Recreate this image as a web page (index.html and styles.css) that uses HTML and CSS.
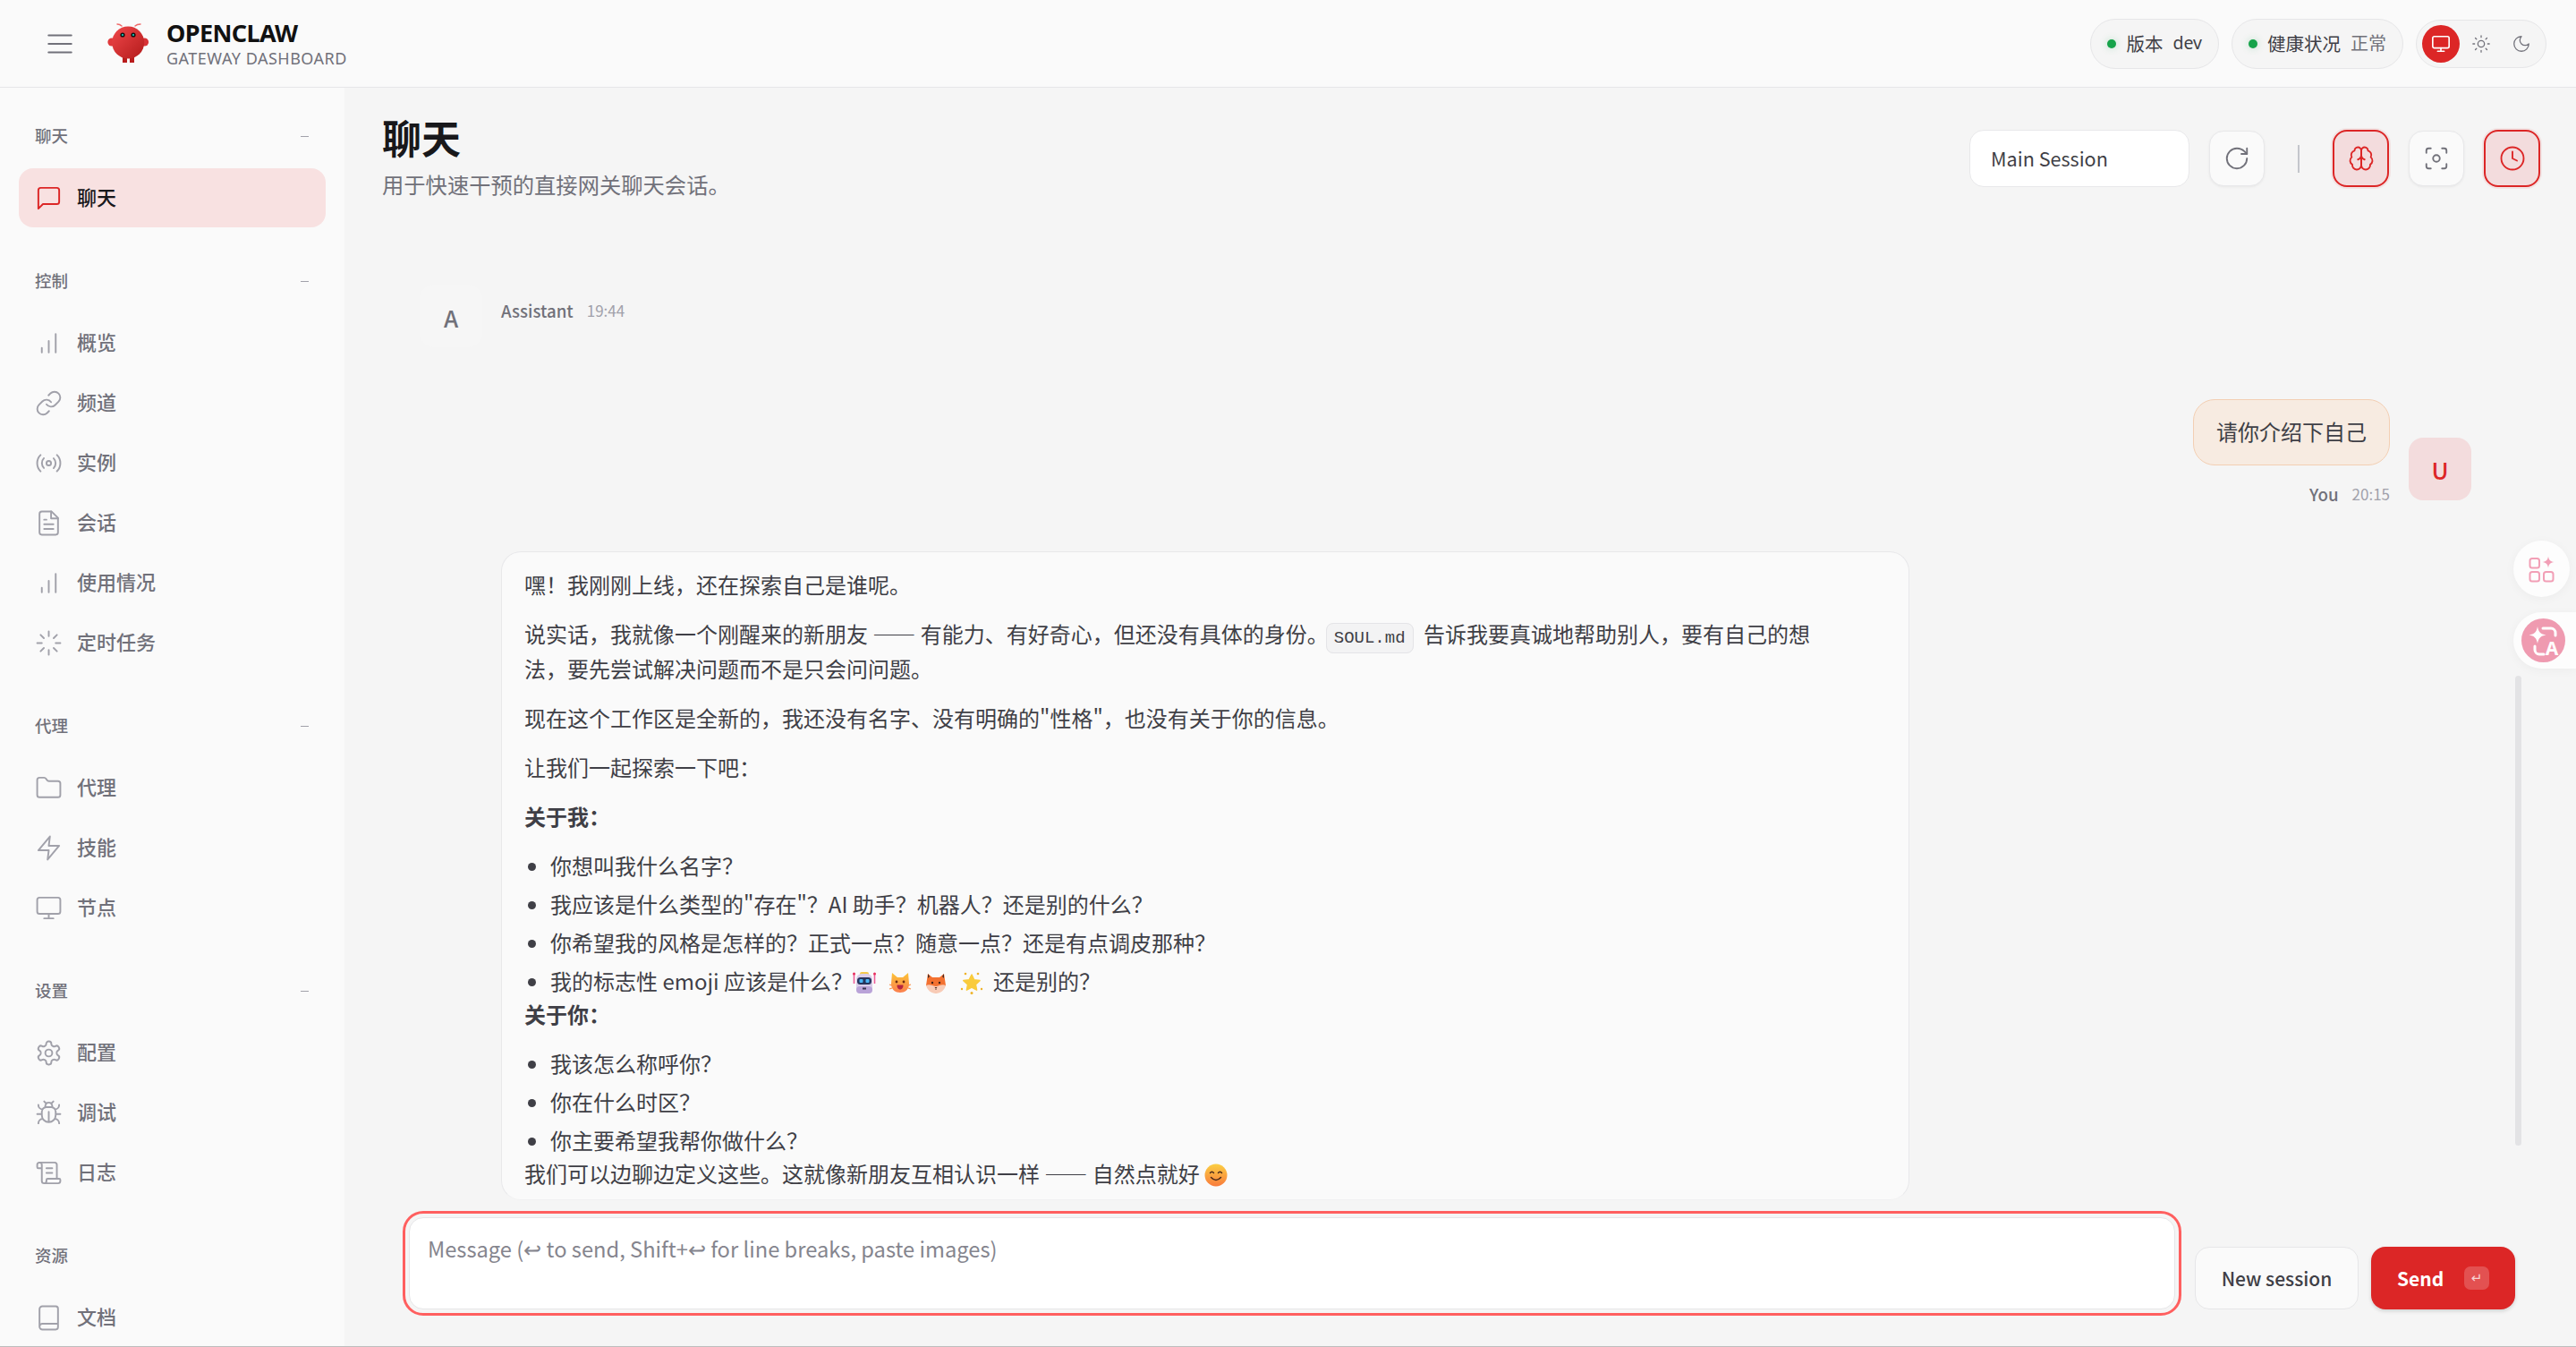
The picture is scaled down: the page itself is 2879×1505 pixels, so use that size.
FILE: index.html
```html
<!DOCTYPE html>
<html lang="zh-CN">
<head>
<meta charset="utf-8">
<title>OpenClaw Gateway Dashboard</title>
<link rel="stylesheet" href="styles.css">
</head>
<body>
<svg class="defs" aria-hidden="true">
  <symbol id="i-menu" viewBox="0 0 24 24"><path d="M4 6h16M4 12h16M4 18h16"/></symbol>
  <symbol id="i-chat" viewBox="0 0 24 24"><path d="M21 15a2 2 0 0 1-2 2H7l-4 4V5a2 2 0 0 1 2-2h14a2 2 0 0 1 2 2z"/></symbol>
  <symbol id="i-bars" viewBox="0 0 24 24"><path d="M12 20V10M18 20V4M6 20v-4"/></symbol>
  <symbol id="i-link" viewBox="0 0 24 24"><path d="M10 13a5 5 0 0 0 7.54.54l3-3a5 5 0 0 0-7.07-7.07l-1.72 1.71"/><path d="M14 11a5 5 0 0 0-7.54-.54l-3 3a5 5 0 0 0 7.07 7.07l1.71-1.71"/></symbol>
  <symbol id="i-radio" viewBox="0 0 24 24"><path d="M4.9 19.1C1 15.2 1 8.8 4.9 4.9"/><path d="M7.8 16.2c-2.3-2.3-2.3-6.1 0-8.5"/><circle cx="12" cy="12" r="2"/><path d="M16.2 7.8c2.3 2.3 2.3 6.1 0 8.5"/><path d="M19.1 4.9C23 8.8 23 15.1 19.1 19"/></symbol>
  <symbol id="i-file" viewBox="0 0 24 24"><path d="M14.5 2H6a2 2 0 0 0-2 2v16a2 2 0 0 0 2 2h12a2 2 0 0 0 2-2V7.5L14.5 2z"/><path d="M14 2v6h6M16 13H8M16 17H8M10 9H8"/></symbol>
  <symbol id="i-loader" viewBox="0 0 24 24"><path d="M12 2v4M12 18v4M4.93 4.93l2.83 2.83M16.24 16.24l2.83 2.83M2 12h4M18 12h4M4.93 19.07l2.83-2.83M16.24 7.76l2.83-2.83"/></symbol>
  <symbol id="i-folder" viewBox="0 0 24 24"><path d="M4 20h16a2 2 0 0 0 2-2V8a2 2 0 0 0-2-2h-7.93a2 2 0 0 1-1.66-.9l-.82-1.2A2 2 0 0 0 7.93 3H4a2 2 0 0 0-2 2v13c0 1.1.9 2 2 2Z"/></symbol>
  <symbol id="i-zap" viewBox="0 0 24 24"><path d="M13 2 3 14h9l-1 8 10-12h-9l1-8z"/></symbol>
  <symbol id="i-monitor" viewBox="0 0 24 24"><rect x="2" y="3" width="20" height="14" rx="2"/><path d="M8 21h8M12 17v4"/></symbol>
  <symbol id="i-gear" viewBox="0 0 24 24"><path d="M12.22 2h-.44a2 2 0 0 0-2 2v.18a2 2 0 0 1-1 1.73l-.43.25a2 2 0 0 1-2 0l-.15-.08a2 2 0 0 0-2.73.73l-.22.38a2 2 0 0 0 .73 2.73l.15.1a2 2 0 0 1 1 1.72v.51a2 2 0 0 1-1 1.74l-.15.09a2 2 0 0 0-.73 2.73l.22.38a2 2 0 0 0 2.73.73l.15-.08a2 2 0 0 1 2 0l.43.25a2 2 0 0 1 1 1.73V20a2 2 0 0 0 2 2h.44a2 2 0 0 0 2-2v-.18a2 2 0 0 1 1-1.73l.43-.25a2 2 0 0 1 2 0l.15.08a2 2 0 0 0 2.73-.73l.22-.39a2 2 0 0 0-.73-2.73l-.15-.08a2 2 0 0 1-1-1.74v-.5a2 2 0 0 1 1-1.74l.15-.09a2 2 0 0 0 .73-2.73l-.22-.38a2 2 0 0 0-2.73-.73l-.15.08a2 2 0 0 1-2 0l-.43-.25a2 2 0 0 1-1-1.73V4a2 2 0 0 0-2-2z"/><circle cx="12" cy="12" r="3"/></symbol>
  <symbol id="i-bug" viewBox="0 0 24 24"><path d="m8 2 1.88 1.88M14.12 3.88 16 2M9 7.13v-1a3.003 3.003 0 1 1 6 0v1"/><path d="M12 20c-3.3 0-6-2.7-6-6v-3a4 4 0 0 1 4-4h4a4 4 0 0 1 4 4v3c0 3.3-2.7 6-6 6M12 20v-9M6.53 9C4.6 8.8 3 7.1 3 5M6 13H2M3 21c0-2.1 1.7-3.9 3.8-4M20.97 5c0 2.1-1.6 3.8-3.5 4M22 13h-4M17.2 17c2.1.1 3.8 1.9 3.8 4"/></symbol>
  <symbol id="i-scroll" viewBox="0 0 24 24"><path d="M15 12h-5M15 8h-5M19 17V5a2 2 0 0 0-2-2H4"/><path d="M8 21h12a2 2 0 0 0 2-2v-1a1 1 0 0 0-1-1H11a1 1 0 0 0-1 1v1a2 2 0 1 1-4 0V5a2 2 0 1 0-4 0v2a1 1 0 0 0 1 1h3"/></symbol>
  <symbol id="i-book" viewBox="0 0 24 24"><path d="M4 19.5v-15A2.5 2.5 0 0 1 6.5 2H18a2 2 0 0 1 2 2v16a2 2 0 0 1-2 2H6.5a2.5 2.5 0 0 1 0-5H20"/></symbol>
  <symbol id="i-sun" viewBox="0 0 24 24"><circle cx="12" cy="12" r="4"/><path d="M12 2v2M12 20v2M4.93 4.93l1.41 1.41M17.66 17.66l1.41 1.41M2 12h2M20 12h2M6.34 17.66l-1.41 1.41M19.07 4.93l-1.41 1.41"/></symbol>
  <symbol id="i-moon" viewBox="0 0 24 24"><path d="M12 3a6 6 0 0 0 9 9 9 9 0 1 1-9-9Z"/></symbol>
  <symbol id="i-refresh" viewBox="0 0 24 24"><path d="M21 12a9 9 0 1 1-9-9c2.52 0 4.93 1 6.74 2.74L21 8"/><path d="M21 3v5h-5"/></symbol>
  <symbol id="i-brain" viewBox="0 0 24 24"><path d="M12 5a3 3 0 1 0-5.997.125 4 4 0 0 0-2.526 5.77 4 4 0 0 0 .556 6.588A4 4 0 1 0 12 18Z"/><path d="M12 5a3 3 0 1 1 5.997.125 4 4 0 0 1 2.526 5.77 4 4 0 0 1-.556 6.588A4 4 0 1 1 12 18Z"/><path d="M15 13a4.5 4.5 0 0 1-3-4 4.5 4.5 0 0 1-3 4M12 18V9"/></symbol>
  <symbol id="i-focus" viewBox="0 0 24 24"><circle cx="12" cy="12" r="3"/><path d="M3 7V5a2 2 0 0 1 2-2h2M17 3h2a2 2 0 0 1 2 2v2M21 17v2a2 2 0 0 1-2 2h-2M7 21H5a2 2 0 0 1-2-2v-2"/></symbol>
  <symbol id="i-clock" viewBox="0 0 24 24"><circle cx="12" cy="12" r="10"/><path d="M12 6v6l4 2"/></symbol>
</svg>

<div class="app">
  <header class="topbar">
    <svg class="ic hamburger"><use href="#i-menu"/></svg>
    <svg class="logo" viewBox="0 0 48 48">
      <defs><linearGradient id="claw" x1="0" y1="0" x2="1" y2="1"><stop offset="0" stop-color="#f0474a"/><stop offset="1" stop-color="#b31b1b"/></linearGradient></defs>
      <path class="antenna" d="M16 4Q14 2 11 2M31 4Q33 2 37 2"/>
      <rect x="17" y="38" width="5" height="7" fill="#b91c1c"/>
      <rect x="25" y="38" width="5" height="7" fill="#b91c1c"/>
      <circle cx="5" cy="22" r="4.6" fill="#e0393c"/>
      <circle cx="41.5" cy="22" r="4.6" fill="#d83236"/>
      <circle cx="23.2" cy="22.5" r="18" fill="url(#claw)"/>
      <circle cx="17" cy="14" r="2.6" fill="#111"/><circle cx="17" cy="14" r="1.1" fill="#15d8c8"/>
      <circle cx="29" cy="14" r="2.6" fill="#111"/><circle cx="29" cy="14" r="1.1" fill="#15d8c8"/>
    </svg>
    <div class="brand">
      <div class="brand-name">OPENCLAW</div>
      <div class="brand-sub">GATEWAY DASHBOARD</div>
    </div>
    <div class="topbar-right">
      <div class="pill"><i class="dot"></i><span class="pill-label">版本</span><span class="pill-value mono">dev</span></div>
      <div class="pill"><i class="dot"></i><span class="pill-label">健康状况</span><span class="pill-value">正常</span></div>
      <div class="theme">
        <span class="theme-btn on"><svg class="ic"><use href="#i-monitor"/></svg></span>
        <span class="theme-btn"><svg class="ic"><use href="#i-sun"/></svg></span>
        <span class="theme-btn"><svg class="ic"><use href="#i-moon"/></svg></span>
      </div>
    </div>
  </header>

  <div class="body">
    <nav class="sidebar">
      <section class="nav-group">
        <div class="nav-label"><span>聊天</span><i class="minus"></i></div>
        <a class="nav-item active"><svg class="ic"><use href="#i-chat"/></svg><span>聊天</span></a>
      </section>
      <section class="nav-group">
        <div class="nav-label"><span>控制</span><i class="minus"></i></div>
        <a class="nav-item"><svg class="ic"><use href="#i-bars"/></svg><span>概览</span></a>
        <a class="nav-item"><svg class="ic"><use href="#i-link"/></svg><span>频道</span></a>
        <a class="nav-item"><svg class="ic"><use href="#i-radio"/></svg><span>实例</span></a>
        <a class="nav-item"><svg class="ic"><use href="#i-file"/></svg><span>会话</span></a>
        <a class="nav-item"><svg class="ic"><use href="#i-bars"/></svg><span>使用情况</span></a>
        <a class="nav-item"><svg class="ic"><use href="#i-loader"/></svg><span>定时任务</span></a>
      </section>
      <section class="nav-group">
        <div class="nav-label"><span>代理</span><i class="minus"></i></div>
        <a class="nav-item"><svg class="ic"><use href="#i-folder"/></svg><span>代理</span></a>
        <a class="nav-item"><svg class="ic"><use href="#i-zap"/></svg><span>技能</span></a>
        <a class="nav-item"><svg class="ic"><use href="#i-monitor"/></svg><span>节点</span></a>
      </section>
      <section class="nav-group">
        <div class="nav-label"><span>设置</span><i class="minus"></i></div>
        <a class="nav-item"><svg class="ic"><use href="#i-gear"/></svg><span>配置</span></a>
        <a class="nav-item"><svg class="ic"><use href="#i-bug"/></svg><span>调试</span></a>
        <a class="nav-item"><svg class="ic"><use href="#i-scroll"/></svg><span>日志</span></a>
      </section>
      <section class="nav-group">
        <div class="nav-label"><span>资源</span></div>
        <a class="nav-item"><svg class="ic"><use href="#i-book"/></svg><span>文档</span></a>
      </section>
    </nav>

    <main class="main">
      <div class="page-head">
        <div class="page-title">
          <h1>聊天</h1>
          <p>用于快速干预的直接网关聊天会话。</p>
        </div>
        <div class="tools">
          <div class="session-select">Main Session</div>
          <button class="tool"><svg class="ic"><use href="#i-refresh"/></svg></button>
          <span class="tool-sep"></span>
          <button class="tool tool-on"><svg class="ic"><use href="#i-brain"/></svg></button>
          <button class="tool"><svg class="ic"><use href="#i-focus"/></svg></button>
          <button class="tool tool-on"><svg class="ic"><use href="#i-clock"/></svg></button>
        </div>
      </div>

      <div class="thread">
        <div class="group-a">
          <div class="avatar avatar-a">A</div>
          <div class="meta meta-a"><b>Assistant</b><time>19:44</time></div>
        </div>

        <div class="group-u">
          <div class="u-col">
            <div class="bubble-u">请你介绍下自己</div>
            <div class="meta"><b>You</b><time>20:15</time></div>
          </div>
          <div class="avatar avatar-u">U</div>
        </div>

        <article class="bubble-a">
          <p>嘿！我刚刚上线，还在探索自己是谁呢。</p>
          <p>说实话，我就像一个刚醒来的新朋友 —— 有能力、有好奇心，但还没有具体的身份。<code>SOUL.md</code> 告诉我要真诚地帮助别人，要有自己的想<br>法，要先尝试解决问题而不是只会问问题。</p>
          <p>现在这个工作区是全新的，我还没有名字、没有明确的"性格"，也没有关于你的信息。</p>
          <p>让我们一起探索一下吧：</p>
          <p><strong>关于我：</strong></p>
          <ul>
            <li>你想叫我什么名字？</li>
            <li>我应该是什么类型的"存在"？AI 助手？机器人？还是别的什么？</li>
            <li>你希望我的风格是怎样的？正式一点？随意一点？还是有点调皮那种？</li>
            <li>我的标志性 emoji 应该是什么？<svg class="emoji emoji-first" viewBox="0 0 26 26">
                <path d="M1.5 3v11M24.5 3v11" stroke="#ee5f9a" stroke-width="1.6" fill="none"/>
                <circle cx="1.5" cy="3" r="1.5" fill="#e8305f"/><circle cx="24.5" cy="3" r="1.5" fill="#e8305f"/>
                <rect x="8" y="1" width="10" height="5" rx="2" fill="#f3c84e"/>
                <rect x="4" y="3" width="18" height="22" rx="6" fill="#d9cdea"/>
                <rect x="4" y="17" width="18" height="8" rx="4" fill="#b9a3d8"/>
                <rect x="5" y="7" width="16" height="8" rx="3.5" fill="#26345c"/>
                <rect x="7.5" y="9" width="4" height="4" rx="1" fill="#4bb4f5"/><rect x="14.5" y="9" width="4" height="4" rx="1" fill="#4bb4f5"/>
                <rect x="11" y="18.5" width="4" height="2" fill="#3a3550"/>
              </svg><svg class="emoji" viewBox="0 0 26 26">
                <defs><linearGradient id="cat" x1="0" y1="0" x2="0" y2="1"><stop offset="0" stop-color="#fcc437"/><stop offset="1" stop-color="#fb7f4e"/></linearGradient></defs>
                <path d="M4 2l6 5h6l6-5 1 12c0 7-5 10-10 10S3 21 3 14z" fill="url(#cat)"/>
                <circle cx="9" cy="12" r="1.4" fill="#6b2b12"/><circle cx="17" cy="12" r="1.4" fill="#6b2b12"/>
                <path d="M9.5 15.5h7c0 4-2 5-3.5 5s-3.500-1-3.500-5z" fill="#b32440"/>
                <path d="M1 15l3 1M1 20l3-1M25 15l-3 1M25 20l-3-1" stroke="#f8904a" stroke-width="1.2"/>
              </svg><svg class="emoji" viewBox="0 0 26 26">
                <path d="M4 3l5 4h8l5-4 2 13-11 9L2 16z" fill="#f37130"/>
                <path d="M4 3l2 3-2 2zM22 3l-2 3 2 2z" fill="#4a2a22"/>
                <path d="M2 16c4-2 8 1 11 1s7-3 11-1c-1 5-6 9-11 9S3 21 2 16z" fill="#f8cbb6"/>
                <circle cx="9" cy="13" r="1.2" fill="#402018"/><circle cx="17" cy="13" r="1.2" fill="#402018"/>
                <path d="M11.500 18h3l-1.500 1.500z" fill="#402018"/>
                <path d="M13 19.500v1.500" stroke="#402018" stroke-width=".8"/>
              </svg><svg class="emoji emoji-last" viewBox="0 0 26 26">
                <path d="M13 4l2.700 5.800 6.300.8-4.600 4.300 1.200 6.300-5.600-3.100-5.600 3.100 1.200-6.300L3.800 10.600l6.300-.8z" fill="#f9cb3c" stroke="#f9cb3c" stroke-linejoin="round" stroke-width="1.500"/>
                <circle cx="6" cy="3" r="1.300" fill="#eeb32a"/><circle cx="20" cy="3" r="1.300" fill="#eeb32a"/><circle cx="2" cy="20" r="1.200" fill="#eeb32a"/><circle cx="24" cy="20" r="1.200" fill="#eeb32a"/><circle cx="13" cy="24.500" r="1.500" fill="#eeb32a"/>
              </svg>还是别的？</li>
          </ul>
          <p><strong>关于你：</strong></p>
          <ul>
            <li>我该怎么称呼你？</li>
            <li>你在什么时区？</li>
            <li>你主要希望我帮你做什么？</li>
          </ul>
          <p class="last">我们可以边聊边定义这些。这就像新朋友互相认识一样 —— 自然点就好 <svg class="emoji emoji-tail" viewBox="0 0 26 26">
              <defs><linearGradient id="smile" x1="0" y1="0" x2="0" y2="1"><stop offset="0" stop-color="#fbcf43"/><stop offset="1" stop-color="#f97b3c"/></linearGradient></defs>
              <circle cx="13" cy="13" r="12.500" fill="url(#smile)"/>
              <path d="M6.500 10.500q2-2.500 4 0M15.500 10.500q2-2.500 4 0M7.500 15.500q5.500 6 11 0" fill="none" stroke="#4a2a1a" stroke-width="1.500" stroke-linecap="round"/>
            </svg></p>
        </article>
      </div>

      <div class="composer">
        <textarea class="composer-input" placeholder="Message (↩ to send, Shift+↩ for line breaks, paste images)"></textarea>
        <div class="composer-actions">
          <button class="btn-new">New session</button>
          <button class="btn-send"><span>Send</span><kbd>↵</kbd></button>
        </div>
      </div>

      <div class="scroll-thumb"></div>
      <div class="float-tool float-grid">
        <svg viewBox="0 0 32 32"><rect x="2.500" y="4" width="10.500" height="10.500" rx="2.500"/><rect x="2.500" y="19" width="10.500" height="10.500" rx="2.500"/><rect x="18" y="19" width="10.500" height="10.500" rx="2.500"/><path class="spark" d="M23 1.500c.6 4.200 2.300 5.900 6.500 6.500-4.200.6-5.900 2.300-6.500 6.500-.6-4.200-2.300-5.900-6.500-6.500 4.200-.6 5.900-2.300 6.500-6.500z"/></svg>
      </div>
      <div class="float-tool float-trans">
        <svg viewBox="0 0 49 49"><circle cx="24.500" cy="24.500" r="24.500" fill="#ef9ab0"/>
          <path fill="#fff" d="M18 9c1 6 3.500 8.500 9.500 9.500-6 1-8.500 3.500-9.500 9.500-1-6-3.500-8.500-9.500-9.500 6-1 8.500-3.500 9.500-9.500z"/>
          <path d="M24 11h9a5 5 0 0 1 5 5v3M15 31v4a5 5 0 0 0 5 5h5" fill="none" stroke="#fff" stroke-width="3" stroke-linecap="round"/>
          <text x="34" y="41" class="trans-a">A</text>
        </svg>
      </div>
    </main>
  </div>
</div>
</body>
</html>
```

FILE: styles.css
```css
* { box-sizing: border-box; }
html, body { margin: 0; padding: 0; height: 100%; overflow: hidden; }
body {
  font-family: "Noto Sans CJK SC", "Noto Sans", sans-serif;
  color: #3f3f46;
  background: #f5f5f5;
}
.defs { display: none; }
.ic {
  width: 31px; height: 31px; flex: none;
  fill: none; stroke: currentColor; stroke-width: 1.5;
  stroke-linecap: round; stroke-linejoin: round;
}
.app {
  height: 1505px; display: flex; flex-direction: column;
  border-bottom: 1px solid #bdbdbd;
}
.topbar {
  height: 98px; flex: none; display: flex; align-items: center;
  padding: 0 33px 0 48px; background: #fafafa; border-bottom: 1px solid #e6e6e8;
}
.hamburger { width: 38px; height: 38px; color: #71717a; stroke-width: 1.35; }
.logo { width: 48px; height: 48px; margin-left: 34px; flex: none; }
.antenna { fill: none; stroke: #ef6a6a; stroke-width: 1.4; stroke-linecap: round; }
.brand { margin-left: 18px; font-family: "Noto Sans", sans-serif; }
.brand-name { font-size: 27px; line-height: 32px; font-weight: 700; color: #111; letter-spacing: -.6px; }
.brand-sub { font-size: 18px; line-height: 24px; color: #71717a; letter-spacing: .5px; }
.topbar-right { margin-left: auto; display: flex; align-items: center; gap: 14px; }
.pill {
  height: 56px; display: flex; align-items: center; gap: 11px;
  padding: 0 18px; border-radius: 28px; background: #f5f5f5; border: 1px solid #e6e6e8;
  font-size: 20.500px; color: #3f3f46;
}
.pill-label, .pill-value { position: relative; top: -1px; }
.dot { width: 10px; height: 10px; border-radius: 50%; background: #16a34a; box-shadow: 0 0 8px rgba(22,163,74,.25); }
.pill-value { font-size: 20px; color: #71717a; }
.pill-value.mono { color: #3f3f46; font-family: "Noto Sans", sans-serif; font-size: 19.500px; letter-spacing: 0; }
.theme {
  height: 54px; display: flex; align-items: center; gap: 3px; padding: 0 6px;
  border-radius: 27px; background: #f5f5f5; border: 1px solid #e6e6e8;
}
.theme-btn { width: 42px; height: 42px; border-radius: 50%; display: flex; align-items: center; justify-content: center; color: #71717a; }
.theme-btn .ic { width: 22px; height: 22px; stroke-width: 1.4; }
.theme-btn.on { background: #dc2626; color: #fff; }
.theme-btn.on .ic { stroke-width: 1.8; }

.body { flex: 1; min-height: 0; display: flex; }
.sidebar { width: 385px; flex: none; background: #fafafa; padding: 39px 21px 0; overflow: hidden; }
.nav-group { display: flex; flex-direction: column; gap: 1px; margin-bottom: 45px; }
.nav-label {
  height: 30px; margin-bottom: 20px; padding: 0 19px 2px 18px;
  display: flex; align-items: center; justify-content: space-between;
  font-size: 18.500px; font-weight: 500; color: #71717a;
}
.minus { width: 9px; height: 1px; background: #a1a1aa; position: relative; top: 1px; }
.nav-item {
  height: 66px; display: flex; align-items: center; gap: 16px;
  padding-left: 18px; border-radius: 16px; font-size: 22px; font-weight: 500; color: #71717a;
}
.nav-item span { position: relative; top: -2px; }
.nav-item .ic { color: #a1a1aa; }
.nav-item.active { background: #f8e1e1; color: #18181b; }
.nav-item.active .ic { color: #dc2626; }

.main { flex: 1; min-width: 0; position: relative; display: flex; flex-direction: column; background: #f5f5f5; }
.page-head { flex: none; display: flex; align-items: center; justify-content: space-between; padding: 30px 40px 0 42px; }
.page-title { margin-top: -2px; padding-bottom: 2px; }
.page-title h1 { margin: 0; font-size: 44px; line-height: 54px; font-weight: 700; color: #18181b; }
.page-title p { margin: 8px 0 0; font-size: 24.300px; line-height: 36px; color: #71717a; }
.tools { display: flex; align-items: center; gap: 22px; }
.session-select {
  width: 246px; height: 64px; display: flex; align-items: center; padding: 0 0 1px 23px;
  background: #fff; border: 1px solid #e8e8ea; border-radius: 16px; font-size: 21.600px; color: #3f3f46;
}
.tool {
  width: 62px; height: 62px; padding: 0; display: flex; align-items: center; justify-content: center;
  background: #fafafa; border: 1px solid #e8e8ea; border-radius: 16px; color: #71717a;
  box-shadow: 0 1px 3px rgba(0,0,0,.06);
}
.tool .ic { width: 30px; height: 30px; }
.tool-sep { width: 2px; height: 31px; margin: 0 15px; background: #c4c6cc; }
.tool-on { width: 63px; height: 64px; background: #f3dcdd; border: 2px solid #dc2626; color: #dc2626; box-shadow: 0 0 0 2px rgba(220,38,38,.08); }

.thread { flex: 1; min-height: 0; overflow: hidden; padding: 92px 117px 0 84px; display: flex; flex-direction: column; }
.group-a { display: flex; gap: 21px; height: 70px; flex: none; margin-bottom: 58px; }
.avatar {
  width: 70px; height: 70px; flex: none; border-radius: 16px;
  display: flex; align-items: center; justify-content: center; font-size: 26px; font-weight: 500;
}
.avatar-a { background: #f6f6f6; color: #71717a; padding-top: 3px; }
.avatar-u { background: #f3dcdd; color: #dc2626; margin-bottom: 4px; }
.meta { display: flex; align-items: center; gap: 15px; height: 22px; }
.meta b { font-size: 18.700px; line-height: 22px; font-weight: 500; color: #71717a; }
.meta time { font-size: 17px; line-height: 22px; color: #a1a1aa; }
.meta-a { margin-top: 18px; }
.group-u { display: flex; justify-content: flex-end; align-items: flex-end; gap: 21px; flex: none; margin-bottom: 52px; }
.u-col { display: flex; flex-direction: column; align-items: flex-end; gap: 21px; }
.bubble-u {
  padding: 16px 25px 18px; background: #f7ebe1; border: 1px solid #f3cfb3; border-radius: 24px;
  font-size: 24px; line-height: 38px; color: #3f3f46;
}
.bubble-a {
  width: 1574px; flex: none; margin-left: 91px; margin-top: 1px; padding: 16px 26px 10px 25px;
  background: #fafafa; border: 1px solid #e8e8ea; border-bottom-color: #f1f1f2; border-radius: 22px;
  font-size: 24px; line-height: 39px; color: #3f3f46;
}
.bubble-a p { margin: 0 0 16px; }
.bubble-a p.last { margin: 0; }
.bubble-a strong { font-weight: 700; }
.bubble-a ul { margin: 0 0 -2px; padding: 0 0 0 29px; }
.bubble-a li + li { margin-top: 4px; }
.bubble-a code {
  font-family: "Liberation Mono", monospace; font-size: 19px; line-height: 1; color: #3f3f46;
  margin: 0 6px 0 -3px; padding: 5px 8px; background: #f3f3f4; border: 1px solid #e4e4e7; border-radius: 8px;
}
.emoji { width: 26px; height: 26px; vertical-align: -5px; margin: 0 7px; }
.emoji-first { margin-left: 0; }
.emoji-last { margin-right: 11px; }
.emoji-tail { margin: 0; }

.composer { flex: none; display: flex; align-items: flex-end; gap: 22px; padding: 0 68px 41px 72px; }
.composer-input {
  flex: 1; height: 103px; resize: none; padding: 15px 20px; display: block;
  background: #fff; border: 1px solid #e6e6e8; border-radius: 16px;
  outline: 3.500px solid #ff5f5f; outline-offset: 4px;
  font: inherit; font-size: 23.700px; line-height: 39px; color: #3f3f46;
}
.composer-input::placeholder { color: #85858e; opacity: 1; }
.composer-actions { display: flex; gap: 14px; }
.btn-new, .btn-send { height: 70px; border-radius: 16px; font-family: inherit; font-size: 21px; font-weight: 500; }
.btn-new { width: 183px; padding: 0; background: #fafafa; border: 1px solid #e6e6e8; color: #3f3f46; }
.btn-send {
  width: 161px; padding: 0 29px; display: flex; align-items: center; justify-content: space-between;
  background: #dc2626; border: 0; color: #fff; font-weight: 600; box-shadow: 0 2px 4px rgba(0,0,0,.15);
}
.btn-send kbd {
  width: 28px; height: 26px; display: flex; align-items: center; justify-content: center;
  border-radius: 7px; background: rgba(255,255,255,.2); color: rgba(255,255,255,.75);
  font: 15px "DejaVu Sans", sans-serif;
}

.scroll-thumb { position: absolute; right: 61px; top: 657px; width: 7px; height: 525px; border-radius: 4px; background: #e3e3e5; }
.float-tool { position: absolute; background: #fdfdfd; box-shadow: 0 2px 12px rgba(0,0,0,.04); display: flex; align-items: center; }
.float-grid { right: 7px; top: 506px; width: 63px; height: 63px; border-radius: 50%; justify-content: center; }
.float-grid svg { width: 32px; height: 32px; fill: none; stroke: #f29fb6; stroke-width: 2; }
.float-grid .spark { fill: #f29fb6; stroke: none; }
.float-trans { right: 0; top: 586px; width: 70px; height: 63px; border-radius: 32px 0 0 32px; padding-left: 9px; }
.float-trans svg { width: 49px; height: 49px; }
.trans-a { font: 700 21px "Noto Sans", sans-serif; fill: #fff; text-anchor: middle; }
```
